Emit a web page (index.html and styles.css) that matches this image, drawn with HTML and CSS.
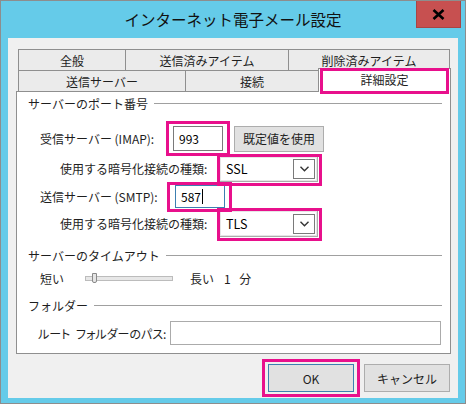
FILE: index.html
```html
<!DOCTYPE html>
<html lang="ja">
<head>
  <meta charset="UTF-8">
  <title>インターネット電子メール設定</title>
  <link rel="stylesheet" href="styles.css">
</head>
<body>
  <div class="window">
    <div class="titlebar">
      <span></span>
      <span class="title">インターネット電子メール設定</span>
      <span class="close">
        <svg width="13" height="11" viewBox="0 0 13 11"><path d="M1.5 1 L11.5 10 M11.5 1 L1.5 10" stroke="#000" stroke-width="2.6" fill="none"/></svg>
      </span>
    </div>

    <div class="client">
      <div class="tabrow">
        <div class="tab w1">全般</div>
        <div class="tab w2">送信済みアイテム</div>
        <div class="tab w3">削除済みアイテム</div>
      </div>
      <div class="tabrow">
        <div class="tab w4">送信サーバー</div>
        <div class="tab w5">接続</div>
        <div class="tab active mark mark-tab">詳細設定</div>
      </div>

      <div class="panel">
        <div class="group">サーバーのポート番号</div>

        <div class="row r-imap">
          <span class="lbl lbl-imap">受信サーバー (IMAP):</span>
          <span class="mark mark-imap"><input class="field port" type="text" value="993"></span>
          <button class="btn btn-default">既定値を使用</button>
        </div>

        <div class="row r-ssl">
          <span class="lbl lbl-enc">使用する暗号化接続の種類:</span>
          <div class="combo mark mark-combo">
            <span>SSL</span>
            <span class="drop"><svg width="9" height="6" viewBox="0 0 9 6"><path d="M0.5 0.8 L4.5 4.8 L8.5 0.8" stroke="#333" stroke-width="1.4" fill="none"/></svg></span>
          </div>
        </div>

        <div class="row r-smtp">
          <span class="lbl lbl-smtp">送信サーバー (SMTP):</span>
          <span class="mark mark-smtp"><span class="field port focused">587<i class="caret"></i></span></span>
        </div>

        <div class="row r-tls">
          <span class="lbl lbl-enc">使用する暗号化接続の種類:</span>
          <div class="combo tall mark mark-combo">
            <span>TLS</span>
            <span class="drop"><svg width="9" height="6" viewBox="0 0 9 6"><path d="M0.5 0.8 L4.5 4.8 L8.5 0.8" stroke="#333" stroke-width="1.4" fill="none"/></svg></span>
          </div>
        </div>

        <div class="group g-timeout">サーバーのタイムアウト</div>

        <div class="row r-slider">
          <span class="lbl lbl-short">短い</span>
          <span class="track"><span class="thumb"></span></span>
          <span class="lbl lbl-long">長い</span>
          <span class="lbl lbl-min">1 分</span>
        </div>

        <div class="group g-folder">フォルダー</div>

        <div class="row r-path">
          <span class="lbl lbl-path">ルート フォルダーのパス:</span>
          <span class="field path"></span>
        </div>
      </div>

      <div class="footer">
        <button class="btn wide btn-ok mark mark-ok">OK</button>
        <button class="btn wide">キャンセル</button>
      </div>
    </div>
  </div>
</body>
</html>
```

FILE: styles.css
```css
body {
  margin: 0;
  font-family: "Noto Sans CJK JP", "Noto Sans", sans-serif;
  font-size: 12px;
  color: #1e1e1e;
}

.window {
  width: 466px;
  height: 404px;
  box-sizing: border-box;
  border: 1px solid #8d8d8d;
  background: #65cbe9;
  display: flex;
  flex-direction: column;
}

/* title bar */
.titlebar {
  height: 37px;
  display: grid;
  grid-template-columns: 1fr auto 1fr;
  align-items: center;
  flex-shrink: 0;
}

.title {
  font-size: 15.5px;
  color: #111;
  line-height: 1;
}

.close {
  justify-self: end;
  align-self: start;
  margin-right: 4px;
  width: 45px;
  height: 27px;
  box-sizing: border-box;
  background: #c75050;
  border: 1px solid #a84545;
  border-top: none;
  display: flex;
  align-items: center;
  justify-content: center;
}

.client {
  flex: 1;
  margin: 0 7px 5px 7px;
  background: #f0f0f0;
  padding: 11px 7px 0 8px;
}

/* tabs */
.tabrow {
  display: flex;
  height: 21px;
  margin-left: 2px;
}

.tab {
  box-sizing: border-box;
  height: 21px;
  border: 1px solid #8f8f8f;
  border-bottom: none;
  background: #ebebeb;
  display: flex;
  align-items: center;
  justify-content: center;
  margin-left: -1px;
}

.tab:first-child {
  margin-left: 0;
}

.w1 { width: 108px; }
.w2 { width: 164px; }
.w3 { width: 162px; }
.w4 { width: 168px; }
.w5 { width: 134px; }

.tab.active {
  width: 133px;
  height: 24px;
  margin-top: -2px;
  background: #fff;
  z-index: 1;
  padding-bottom: 2px;
}

/* pink highlight frames */
.mark {
  position: relative;
}

.mark::after {
  content: "";
  position: absolute;
  border: 3px solid #e8108c;
  pointer-events: none;
  z-index: 2;
}

.mark-tab::after { inset: -1px 1px -2px 1px; }
.mark-imap::after { inset: -5px -7px -5px -7px; }
.mark-smtp::after { inset: -3px -7px -4px -8px; }
.mark-combo::after { inset: -3px -5px -5px -3px; }
.mark-ok::after { inset: -6px -7px -6px -7px; }

/* panel */
.panel {
  width: 435px;
  height: 263px;
  box-sizing: border-box;
  background: #fff;
  border: 1px solid #8f8f8f;
  padding-top: 3px;
}

.group {
  display: flex;
  align-items: center;
  gap: 6px;
  height: 16px;
  margin: 0 8px 0 11px;
  white-space: nowrap;
}

.group::after {
  content: "";
  flex: 1;
  height: 1px;
  background: #a0a0a0;
}

.g-timeout { margin-top: 10px; }
.g-folder { margin-top: 11px; }

.row {
  display: flex;
  align-items: center;
}

.r-imap { margin-top: 15px; height: 25px; }
.r-ssl { margin-top: 4px; height: 27px; }
.r-smtp { margin-top: 3px; height: 23px; }
.r-tls { margin-top: 2px; height: 27px; }
.r-slider { margin-top: 7px; height: 16px; }
.r-path { margin-top: 8px; height: 24px; }

.lbl {
  white-space: nowrap;
  flex-shrink: 0;
}

.lbl-imap { margin-left: 23px; width: 133px; }
.lbl-smtp { margin-left: 23px; width: 135px; }
.lbl-enc { margin-left: 43px; width: 159px; }
.lbl-short { margin-left: 23px; width: 45px; }
.lbl-long { margin-left: 17px; width: 34px; }
.lbl-min { word-spacing: 6px; }

.lbl-path {
  margin-left: 21px;
  width: 132px;
  font-feature-settings: "palt";
  word-spacing: 3px;
}

.field {
  box-sizing: border-box;
  border: 1px solid #7a7a7a;
  background: #fff;
  font: inherit;
  color: #000;
  display: flex;
  align-items: center;
  margin: 0;
}

.port {
  width: 50px;
  height: 25px;
  padding: 0 0 0 5px;
}

.port.focused {
  height: 23px;
  border-color: #3c7fb1;
}

.caret {
  display: inline-block;
  width: 1px;
  height: 15px;
  background: #000;
  margin-left: 1px;
}

.path {
  width: 271px;
  height: 24px;
  border-color: #ababab;
}

/* drop-down */
.combo {
  box-sizing: border-box;
  width: 99px;
  height: 26px;
  border: 1px solid #ababab;
  box-shadow: inset 0 0 0 1px #e6e6e6;
  background: #fff;
  display: flex;
  align-items: center;
  justify-content: space-between;
  padding: 0 2px 0 6px;
  font-size: 12.5px;
  color: #000;
}

.combo.tall {
  height: 27px;
}

.drop {
  box-sizing: border-box;
  width: 22px;
  height: 20px;
  border: 1px solid #7a7a7a;
  display: flex;
  align-items: center;
  justify-content: center;
}

/* timeout slider */
.track {
  position: relative;
  box-sizing: border-box;
  width: 88px;
  height: 5px;
  background: #e7e7e7;
  border: 1px solid #bcbcbc;
}

.thumb {
  position: absolute;
  left: 6px;
  top: -4px;
  width: 5px;
  height: 10px;
  box-sizing: border-box;
  background: #e5e5e5;
  border: 1px solid #8a8a8a;
  border-radius: 0 0 2px 2px;
}

/* buttons */
.btn {
  box-sizing: border-box;
  font: inherit;
  color: #1e1e1e;
  background: #e1e1e1;
  border: 1px solid #adadad;
  padding: 0;
  margin: 0;
}

.btn-default {
  margin-left: 11px;
  width: 90px;
  height: 26px;
}

.footer {
  display: flex;
  justify-content: flex-end;
  gap: 10px;
  margin: 10px 1px 0 0;
}

.wide {
  width: 86px;
  height: 28px;
}

.btn-ok {
  border-color: #3c7fb1;
}
```
